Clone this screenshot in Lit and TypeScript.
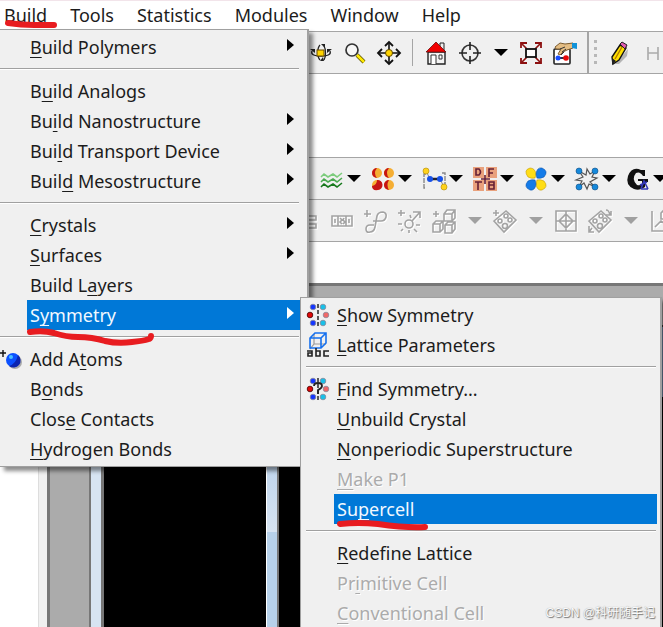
import { LitElement, html, css, svg, nothing, TemplateResult } from "lit";
import { customElement } from "lit/decorators.js";
import { classMap } from "lit/directives/class-map.js";

type Entry =
  | { sep: true }
  | { sep?: false; label: string; more?: boolean; icon?: string; selected?: boolean; disabled?: boolean };

// An ampersand stands before the accelerator letter of a label.
const buildMenu: Entry[] = [
  { label: "&Build Polymers", more: true },
  { sep: true },
  { label: "B&uild Analogs" },
  { label: "Bu&ild Nanostructure", more: true },
  { label: "Bui&ld Transport Device", more: true },
  { label: "Buil&d Mesostructure", more: true },
  { sep: true },
  { label: "&Crystals", more: true },
  { label: "&Surfaces", more: true },
  { label: "Build L&ayers" },
  { label: "S&ymmetry", more: true, selected: true },
  { sep: true },
  { label: "Add A&toms", icon: "atom" },
  { label: "B&onds" },
  { label: "Clos&e Contacts" },
  { label: "&Hydrogen Bonds" },
];

const symmetryMenu: Entry[] = [
  { label: "&Show Symmetry", icon: "symmetry" },
  { label: "&Lattice Parameters", icon: "lattice" },
  { sep: true },
  { label: "&Find Symmetry...", icon: "findSymmetry" },
  { label: "&Unbuild Crystal" },
  { label: "&Nonperiodic Superstructure" },
  { label: "&Make P1", disabled: true },
  { label: "Su&percell", selected: true },
  { sep: true },
  { label: "&Redefine Lattice" },
  { label: "Pr&imitive Cell", disabled: true },
  { label: "&Conventional Cell", disabled: true },
];

const pairs = svg`
  <path d="M12 1v22" stroke="#333" stroke-width="1.6" stroke-dasharray="4 2"/>
  <g stroke="#889" stroke-width=".8">
    <circle cx="7" cy="4" r="2.800" fill="#1436ff"/><circle cx="17" cy="4" r="2.800" fill="#18c0e8"/>
    <circle cx="4" cy="12" r="2.800" fill="#e00808" stroke="#400"/><circle cx="20" cy="12" r="2.800" fill="#f06868"/>
    <circle cx="7" cy="20" r="2.800" fill="#1436ff"/><circle cx="17" cy="20" r="2.800" fill="#18c0e8"/>
  </g>`;

const cell = svg`<path d="M1 12L13 2l10 9-12 12z"/><circle cx="13" cy="7" r="2"/><circle cx="7" cy="12" r="2"/><circle cx="17" cy="11" r="2"/><circle cx="12" cy="17" r="2.5"/>`;

const icons: Record<string, TemplateResult> = {
  rotate: svg`
    <g fill="none" stroke="#222" stroke-width="1.3"><path d="M3 10q-2 5 9 5t9-5"/><path d="M11 19c-3-3-3-12 0-15M15 5c2 3 2 11 0 14"/></g>
    <path d="M1 8h5v4zM18 8h5l-5 4zM12 3h4v4zM11 20h4l-1-4z" fill="#222"/>
    <rect x="8" y="9" width="7" height="6" fill="#ffd400" stroke="#6b4c00"/>`,
  zoom: svg`
    <circle cx="9" cy="9" r="6" fill="#f6f6f6" stroke="#333" stroke-width="1.7"/>
    <path d="M14 14l7 7" stroke="#5c5200" stroke-width="4"/><path d="M14 14l7 7" stroke="#ffe900" stroke-width="2.500"/>`,
  move: svg`
    <path d="M12 2v20M2 12h20" stroke="#111" stroke-width="1.6"/>
    <path d="M8 5l4-4 4 4M8 19l4 4 4-4M5 8l-4 4 4 4M19 8l4 4-4 4" fill="none" stroke="#111" stroke-width="1.8"/>
    <circle cx="12" cy="12" r="3.500" fill="#ffd400" stroke="#5b4600"/>`,
  home: svg`
    <path d="M16 2h4v9h-4z" fill="#eee" stroke="#222"/>
    <path d="M4 11h17v12H4z" fill="#f4f4f4" stroke="#222" stroke-width="1.4"/>
    <path d="M12 1l10 10H2z" fill="#f00000" stroke="#611" stroke-width=".8"/>
    <path d="M7 23v-9h5v9M15 14h3v4h-3z" fill="#fff" stroke="#333"/>`,
  target: svg`
    <circle cx="12" cy="12" r="8" fill="none" stroke="#333" stroke-width="1.6"/>
    <path d="M12 1v8M12 15v8M1 12h8M15 12h8" stroke="#222" stroke-width="1.6"/>`,
  fit: svg`
    <path d="M2 2l6 6M22 2l-6 6M2 22l6-6M22 22l-6-6" stroke="#8c1010" stroke-width="1.6"/>
    <path d="M2 7V2h6M16 2h6v5M2 17v5h6M16 22h6v-5" fill="none" stroke="#8c1010" stroke-width="1.8"/>
    <rect x="7" y="8" width="10" height="8" fill="#fff" stroke="#111" stroke-width="1.8"/>`,
  display: svg`
    <rect x="1" y="8" width="16" height="15" rx="1" fill="#fff" stroke="#222" stroke-width="1.6"/>
    <path d="M5 17h9" stroke="#334" stroke-width="2"/><circle cx="5" cy="17" r="2.500" fill="#164cff"/><circle cx="13" cy="17" r="2.800" fill="#e80808"/>
    <path d="M2 6l5-4 5 1 8-1v5l-6 2-4 2-3 3-2-1 3-5H3z" fill="#e4bd83" stroke="#7c5c30"/>
    <path d="M19 2h5v6l-5-1z" fill="#1292d8"/><path d="M7 8l5-2M9 11l4-3M8 14l3-3" stroke="#333"/>`,
  pencil: svg`
    <path d="M8 23L21 8l-1 7-8 8z" fill="#b4b4b4"/>
    <path d="M5 16L13 4l6 3-7 12-6 4z" fill="#ffe000" stroke="#111" stroke-width="1.4"/>
    <path d="M13 3l2-2 5 3-2 4z" fill="#e05ab0" stroke="#222"/><path d="M15 6L8 18" stroke="#b27a00" stroke-width="1.4"/>
    <path d="M5 17l4 3-4 4z" fill="#222"/>`,
  hydrogen: svg`<path d="M7 6v13M17 6v13M7 12h10" fill="none" stroke="#aaa" stroke-width="1.6"/>`,
  waves: svg`
    <g fill="none" stroke-width="1.6">
      <path d="M1 10l3-3 4 3 5-3 4 3 5-4" stroke="#7ccc7c"/><path d="M1 15l3-3 4 3 5-3 4 3 5-4" stroke="#4aa850"/><path d="M1 20l3-3 4 3 5-3 4 3 5-4" stroke="#16781c"/>
    </g>`,
  orbitals: svg`
    <g fill="#f5ae33"><circle cx="6" cy="6" r="5"/><circle cx="18" cy="6" r="5"/><circle cx="6" cy="18" r="5"/><circle cx="18" cy="18" r="5"/></g>
    <path d="M6 1a5 5 0 1 0 0 10q-4-5 0-10zM18 1a5 5 0 0 0 0 10q-4-5 0-10zM6 13a5 5 0 0 1 1 10q-6 1-6-4 5-1 5-6zM18 13a5 5 0 0 0 0 10q-3-5 0-10z" fill="#c61414"/>`,
  dimer: svg`
    <path d="M4 7H2v14h2M20 6h3v11" fill="none" stroke="#888" stroke-width="1.4" stroke-dasharray="5 1"/>
    <path d="M4 4l4 8h10l4 8" fill="none" stroke="#888" stroke-width="1"/><path d="M8 12h10" stroke="#223" stroke-width="2.500"/>
    <circle cx="4" cy="4" r="3" fill="#ffd21c" stroke="#b08800" stroke-width=".6"/><circle cx="22" cy="20" r="3" fill="#ffd21c" stroke="#b08800" stroke-width=".6"/>
    <circle cx="8" cy="12" r="3" fill="#1550e8"/><circle cx="18" cy="12" r="3" fill="#1550e8"/>`,
  dftb: svg`
    <path d="M0 0h11v11H0zM13 0h11v11H13zM0 13h11v11H0zM13 13h11v11H13z" fill="#e9a17d"/>
    <g fill="none" stroke="#652036" stroke-width="1.6"><path d="M3 2h3q3 3 0 6H3zM21 2h-5v8M16 6h4M2 15h7M5 15v8M16 15h5v7h-5zM16 18h5M8 12h9M12 8v9"/></g>`,
  petals: svg`
    <g stroke-width=".6"><path d="M11 11Q8 12 4 10-1 3 6 1q5 0 6 6zM13 13q3-1 7 1 5 6-2 9-5 1-6-6z" fill="#ffdd16" stroke="#c49c00"/>
    <path d="M13 11q3 1 7-1 5-6-2-9-5-1-6 6zM11 13q-3-1-7 1-5 6 2 9 5 1 6-6z" fill="#147be8" stroke="#0953ac"/></g>`,
  mesh: svg`
    <path d="M4 4l7 4 1-6 3 5 5-3-3 6 5 1-7 4 5 5-6-3-2 5-3-6-5 4 3-6-6-1 7-3z" fill="none" stroke="#555" stroke-width="1.2"/>
    <g fill="#1689db" stroke="#104c80" stroke-width=".6"><circle cx="4" cy="4" r="3"/><circle cx="20" cy="4" r="3"/><circle cx="4" cy="20" r="3"/><circle cx="20" cy="20" r="3"/></g>`,
  gulp: svg`
    <path d="M19 3v6h-2q-3-5-7-3-5 6 1 12 3 1 5-1v-3h-4v-2h10v3h-3v5q-5 4-11 2-9-4-6-13Q6-1 15 3z" fill="#111"/>
    <path d="M15 22l3-8 4 8M14 18l7-3M15 22h7" fill="none" stroke="#3338b8" stroke-width="1.6"/>`,
  blocks: svg`<path d="M8 7h12v4H8zM8 15h12v4H8z"/>`,
  strip: svg`<path d="M2 7h20v10H2zM8 7v10M16 7v10M5 10v4M19 10v4M10 9l2 2-2 2 2 2M14 9l-1 2 2 2-2 2"/>`,
  chain: svg`<path d="M0 5h7M3 1v7M10 16H6q-4 0-4 4t4 3q4 0 5-5l2-11q1-4 6-4 4 1 3 5t-5 4H9"/>`,
  atomAdd: svg`<circle cx="11" cy="15" r="4"/><path d="M0 4h7M3 1v6M14 12l8-9M15 3h7v6M0 15h4M18 16h4M11 21v3M5 20l-2 2M16 20l3 3M12 6l1 3"/>`,
  cubes: svg`<path d="M1 5h6M4 2v6M12 5l3-4h8v8l-3 3h-8zM12 5h8v7M20 5l3-4M1 15l3-3h7v8l-3 3H1zM1 15h7v8M8 15l3-3M13 16l3-3h7v7l-3 4h-7zM13 16h7v8M20 16l3-3"/>`,
  cellAdd: svg`${cell}<path d="M0 4h6M3 1v6"/>`,
  grid: svg`<path d="M2 2h20v20H2zM12 2v20M2 12h20M12 5l7 7-7 7-7-7z"/>`,
  cellTurn: svg`${cell}<path d="M18 1q3 0 4 5M18 6h5V2M1 17v6h5M1 23l3-4"/>`,
  chart: svg`<path d="M3 2v20h20M6 18l6-6 4 3 6-7M12 9V4l3-3h5v6l-3 3h-5z"/>`,
  atom: svg`
    <circle cx="15" cy="15" r="7" fill="#aaa"/><circle cx="13" cy="13" r="7" fill="#0b50ff"/><path d="M18 8a7 7 0 0 1-9 11q7-2 9-11z" fill="#0b24b0"/>
    <circle cx="11" cy="10" r="2" fill="#49c0ff"/><path d="M-1 6h7M3 3v7" stroke="#111" stroke-width="1.4"/>`,
  symmetry: pairs,
  findSymmetry: svg`${pairs}<path d="M8 9q0-3 4-3t4 3q0 2-4 4v4" fill="none" stroke="#222" stroke-width="1.8"/>`,
  lattice: svg`
    <path d="M8 1V11L4 16M8 11h12" fill="none" stroke="#9a9a9a" stroke-width="1.2"/>
    <path d="M4 5l5-5h11v10l-5 5H4zM4 5h11v10M15 5l5-5" fill="none" stroke="#1670ee" stroke-width="1.6"/>
    <path d="M1 18h5v5H2v-3h4M10 15v8h4v-5h-4M23 18h-5v5h5" fill="none" stroke="#222" stroke-width="1.6"/>`,
};

const glyph = (name: string) => html`<svg class="glyph" viewBox="0 0 24 24" aria-hidden="true">${icons[name]}</svg>`;

const label = (text: string) => {
  const at = text.indexOf("&");
  return html`<span>${text.slice(0, at)}<u>${text[at + 1]}</u>${text.slice(at + 2)}</span>`;
};

const shared = css`
  * { box-sizing: border-box; }
  button { font: inherit; color: inherit; background: none; border: 0; margin: 0; padding: 0; }
  .glyph { width: 24px; height: 24px; display: block; overflow: visible; flex: none; }
`;

@customElement("popup-menu")
export class PopupMenu extends LitElement {
  static properties = { entries: { attribute: false } };
  declare entries: Entry[];

  static styles = [
    shared,
    css`
      :host { display: block; box-sizing: border-box; background: #f0f0f0; border: 1px solid #a0a0a0; border-right-width: 2px; padding: 2px 3px 2px 0; color: #1c1c1c; box-shadow: 4px 4px 4px rgba(0, 0, 0, 0.45); }
      .item { display: flex; align-items: center; width: 100%; height: 30px; text-align: left; white-space: nowrap; }
      .gutter { width: var(--gutter); flex: none; height: 30px; display: flex; align-items: center; padding-left: var(--inset); }
      .text { flex: 1; height: 30px; display: flex; align-items: center; padding: 0 6px 0 3px; }
      .text span { flex: 1; }
      .selected .text { background: #0078d7; color: #f2f8ff; }
      .disabled { color: #ababab; text-shadow: 1px 1px 0 #fff; }
      .more { border: 6px solid transparent; border-left: 7px solid #000; border-right: 0; margin-bottom: 5px; }
      .selected .more { border-left-color: #fff; }
      .rule { border: 0; margin: 6px 1px 6px var(--inset); height: 2px; background: #a0a0a0; border-bottom: 1px solid #fff; }
      u { text-decoration-thickness: 1px; text-underline-offset: 3px; text-decoration-skip-ink: none; }
    `,
  ];

  render() {
    return html`${this.entries.map((e) =>
      e.sep
        ? html`<hr class="rule" />`
        : html`<button
            role="menuitem"
            class=${classMap({ item: true, selected: !!e.selected, disabled: !!e.disabled })}
            ?disabled=${e.disabled}
          >
            <span class="gutter">${e.icon ? glyph(e.icon) : nothing}</span>
            <span class="text">${label(e.label)}${e.more ? html`<i class="more"></i>` : nothing}</span>
          </button>`
    )}`;
  }
}

@customElement("app-root")
export class AppRoot extends LitElement {
  static styles = [
    shared,
    css`
      :host { display: flex; flex-direction: column; position: relative; min-height: 100vh; overflow: hidden; background: #fff; color: #1c1c1c; font: 18px/24px "Noto Sans", "Noto Sans CJK SC", sans-serif; }
      .menubar { display: flex; gap: 23px; height: 31px; padding: 2px 4px 0; border-top: 1px solid #f2e4ea; }
      .menubar button { height: 24px; }
      .toolbar { display: flex; align-items: center; height: 42px; background: #f0f0f0; border-top: 1px solid #a5a5a5; white-space: nowrap; overflow: hidden; }
      .standard { height: 43px; padding-left: 304px; border-bottom: 1px solid #a5a5a5; }
      .modules { padding-left: 320px; gap: 8px; }
      .sketch { padding-left: 291px; height: 43px; border-bottom: 1px solid #a5a5a5; }
      .blank { height: 83px; }
      .strip { height: 41px; }
      .tool { width: 34px; height: 34px; flex: none; display: flex; align-items: center; justify-content: center; }
      .pair { display: flex; align-items: center; flex: none; }
      .pair .tool { width: 24px; }
      .drop { width: 27px; height: 34px; flex: none; display: flex; align-items: center; justify-content: center; }
      .pair .drop { width: 19px; }
      .drop::before { content: ""; border: 7px solid transparent; border-top: 7px solid #000; border-bottom: 0; }
      .dim .drop::before { border-top-color: #a0a0a0; }
      .dim .glyph { fill: none; stroke: #a3a3a3; stroke-width: 1.6; filter: drop-shadow(1px 1px 0 #fff); }
      .divider { width: 13px; height: 27px; flex: none; border-left: 6px solid transparent; background: linear-gradient(#a5a5a5, #a5a5a5) left / 1px 100% no-repeat; background-origin: padding-box; }
      .grip { width: 20px; height: 42px; flex: none; display: flex; align-items: center; padding-left: 5px; gap: 5px; }
      .grip::before { content: ""; width: 2px; height: 42px; background: #a5a5a5; }
      .grip::after { content: ""; width: 3px; height: 26px; background: repeating-linear-gradient(#b8b8b8 0 3px, #f0f0f0 3px 7px); }
      .work { flex: 1; display: grid; grid-template-columns: 38px 9px 3px 39px 2px 10px 3px 162px 13px 1fr 3px; background: #ababab; border-top: 3px solid #777; padding-top: 39px; }
      .panel { background: #fff; }
      .edge { background: #f0f0f0; border-left: 1px solid #ddd; }
      .dark { background: #777; }
      .frame { background: #d7e4f2; }
      .canvas { background: #000; }
      .split { background: linear-gradient(#bcd3ec 131px, #d7e4f2 207px, #b7d1ea 207px); border-left: 1px solid #fff; border-right: 2px solid #777; }
      .sliver { background: linear-gradient(#333 0 2px, #7694b4 2px 72px, #000 72px); }
      .build { position: absolute; left: 0; top: 29px; width: 309px; --gutter: 27px; --inset: 0px; border-left: 0; padding-right: 7px; }
      .symmetry { position: absolute; left: 300px; right: 1px; top: 297px; --gutter: 33px; --inset: 5px; }
      .marks { position: absolute; left: 0; top: 0; width: 663px; height: 627px; pointer-events: none; fill: none; stroke: #e81c20; stroke-width: 6; stroke-linecap: round; stroke-linejoin: round; }
      .credit { position: absolute; right: 8px; bottom: 2px; font-family: "Liberation Sans", "Noto Sans CJK SC", sans-serif; font-size: 12px; line-height: 24px; color: #fafafa; text-shadow: 1px 1px 1px #777, 0 0 1px #999; }
    `,
  ];

  tool(name: string) {
    return html`<button class="tool" aria-label=${name}>${glyph(name)}</button>`;
  }

  drop() {
    return html`<button class="drop" aria-label="More options"></button>`;
  }

  render() {
    return html`
      <nav class="menubar">
        ${["Build", "Tools", "Statistics", "Modules", "Window", "Help"].map((t) => html`<button>${t}</button>`)}
      </nav>
      <div class="toolbar standard">
        ${["rotate", "zoom", "move"].map(this.tool)}<i class="divider"></i>${["home", "target"].map(this.tool)}${this.drop()}
        ${["fit", "display"].map(this.tool)}<i class="grip"></i>${["pencil", "hydrogen"].map(this.tool)}
      </div>
      <div class="blank"></div>
      <div class="toolbar modules">
        ${["waves", "orbitals", "dimer", "dftb", "petals", "mesh", "gulp"].map(
          (n) => html`<div class="pair">${this.tool(n)}${this.drop()}</div>`
        )}
      </div>
      <div class="toolbar sketch dim">
        ${["blocks", "strip", "chain", "atomAdd", "cubes"].map(this.tool)}${this.drop()}${this.tool("cellAdd")}${this.drop()}
        ${["grid", "cellTurn"].map(this.tool)}${this.drop()}${this.tool("chart")}
      </div>
      <div class="strip"></div>
      <main class="work">
        <div class="panel"></div><div class="edge"></div><div class="dark"></div><div></div><div class="dark"></div>
        <div class="frame"></div><div class="dark"></div><div class="canvas"></div><div class="split"></div>
        <div class="canvas"></div><div class="sliver"></div>
      </main>
      <popup-menu class="build" role="menu" .entries=${buildMenu}></popup-menu>
      <popup-menu class="symmetry" role="menu" .entries=${symmetryMenu}></popup-menu>
      <svg class="marks" viewBox="0 0 663 627" aria-hidden="true">
        <path d="M8 23q13 2 26 2h20" />
        <path d="M30 332q13-2 24 1 12 4 24 4 14 0 27 4 13 3 27 1 11-1 17-3 2-1 2-3" />
        <path d="M340 524q18-2 38 0 28 4 47 3" />
      </svg>
      <div class="credit">CSDN @科研随手记</div>
    `;
  }
}
